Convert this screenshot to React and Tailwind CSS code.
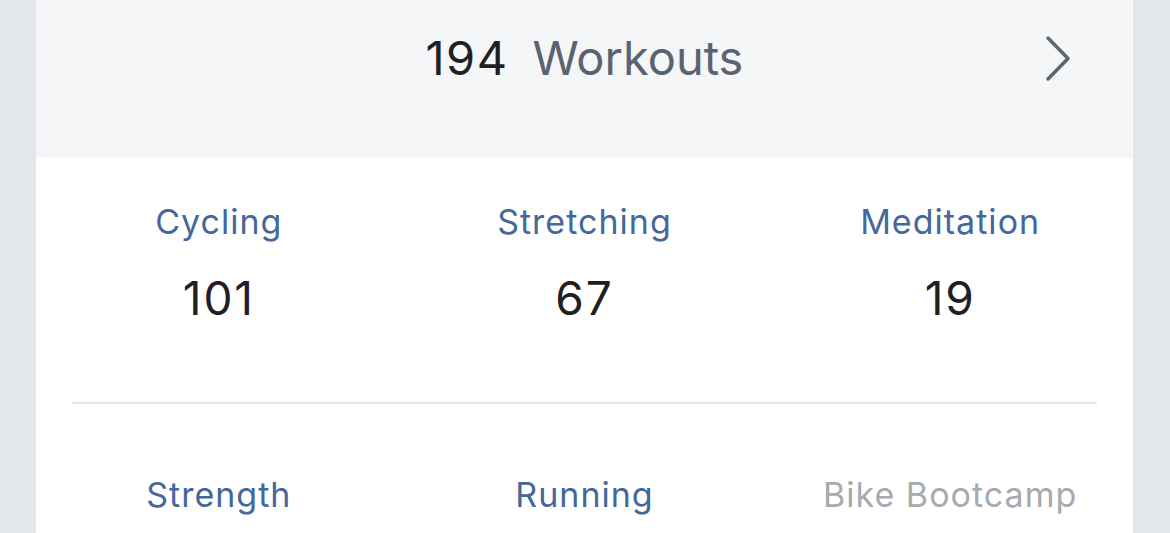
import React from "react";

const font = { fontFamily: "Inter, 'Noto Sans', sans-serif" };

function Stat({ label, value, muted }) {
  return (
    <div className="flex flex-col items-center">
      <div
        className={`text-[34px] leading-[40px] tracking-[0.03em] ${muted ? "text-[#a8aaae]" : "text-[#44689a]"}`}
      >
        {label}
      </div>
      {value !== undefined && (
        <div className="mt-[28px] text-[46px] leading-[56px] tracking-[0.04em] text-[#1f2024]">{value}</div>
      )}
    </div>
  );
}

export default function App() {
  return (
    <div className="w-[1170px] h-[533px] overflow-hidden bg-[#e3e6eb] px-[36px]" style={font}>
      <div className="h-full w-[1097px] bg-white">
        <div className="h-[158px] bg-[#f5f6f8] grid grid-cols-[1fr_auto_1fr] items-start pt-[30px]">
          <div />
          <div className="flex items-baseline gap-[24px] text-[47px] leading-[56px]">
            <span className="text-[#1f2024] tracking-[0.03em]">194</span>
            <span className="text-[#5b6270]">Workouts</span>
          </div>
          <div className="flex justify-end pr-[60px] pt-[5px]">
            <svg width="30" height="48" viewBox="0 0 30 48" fill="none">
              <polyline
                points="5,3 25,23.5 5,44"
                stroke="#5f6470"
                strokeWidth="3.5"
                strokeLinecap="round"
                strokeLinejoin="round"
              />
            </svg>
          </div>
        </div>
        <div className="grid grid-cols-3 pt-[44px]">
          <Stat label="Cycling" value="101" />
          <Stat label="Stretching" value="67" />
          <Stat label="Meditation" value="19" />
        </div>
        <div className="mx-[36px] mt-[76px] h-[2px] bg-[#e6e7e9]" />
        <div className="grid grid-cols-3 pt-[71px]">
          <Stat label="Strength" />
          <Stat label="Running" />
          <Stat label="Bike Bootcamp" muted />
        </div>
      </div>
    </div>
  );
}
